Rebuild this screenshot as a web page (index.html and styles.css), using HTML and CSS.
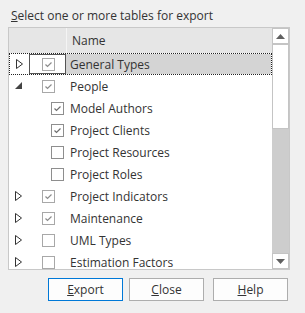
FILE: index.html
```html
<!DOCTYPE html>
<html lang="en">
<head>
    <meta charset="UTF-8">
    <title>Export Tables</title>
    <link rel="stylesheet" href="styles.css">
</head>
<body>
    <div class="prompt"><u>S</u>elect one or more tables for export</div>

    <div class="listbox">
        <div class="list">
            <div class="header">
                <span class="cell-exp"></span>
                <span class="cell-chk"></span>
                <span class="cell-name">Name</span>
            </div>

            <div class="row selected">
                <span class="cell-exp"><svg class="tri" width="7" height="10"><polygon points="0.5,0.5 6.5,5 0.5,9.5" /></svg></span>
                <span class="cell-chk"><span class="cb top checked"><svg width="11" height="11"><path d="M2.5 5.5 L4.5 7.5 L8.5 3.5" /></svg></span></span>
                <span class="cell-name">General Types</span>
            </div>
            <div class="row">
                <span class="cell-exp"><svg class="tri-open" width="8" height="8"><polygon points="7,0 7,7 0,7" /></svg></span>
                <span class="cell-chk"><span class="cb top checked"><svg width="11" height="11"><path d="M2.5 5.5 L4.5 7.5 L8.5 3.5" /></svg></span></span>
                <span class="cell-name">People</span>
            </div>
            <div class="row child">
                <span class="cell-exp"></span>
                <span class="cell-chk"><span class="cb checked"><svg width="11" height="11"><path d="M2.5 5.5 L4.5 7.5 L8.5 3.5" /></svg></span></span>
                <span class="cell-name">Model Authors</span>
            </div>
            <div class="row child">
                <span class="cell-exp"></span>
                <span class="cell-chk"><span class="cb checked"><svg width="11" height="11"><path d="M2.5 5.5 L4.5 7.5 L8.5 3.5" /></svg></span></span>
                <span class="cell-name">Project Clients</span>
            </div>
            <div class="row child">
                <span class="cell-exp"></span>
                <span class="cell-chk"><span class="cb"></span></span>
                <span class="cell-name">Project Resources</span>
            </div>
            <div class="row child">
                <span class="cell-exp"></span>
                <span class="cell-chk"><span class="cb"></span></span>
                <span class="cell-name">Project Roles</span>
            </div>
            <div class="row">
                <span class="cell-exp"><svg class="tri" width="7" height="10"><polygon points="0.5,0.5 6.5,5 0.5,9.5" /></svg></span>
                <span class="cell-chk"><span class="cb top checked"><svg width="11" height="11"><path d="M2.5 5.5 L4.5 7.5 L8.5 3.5" /></svg></span></span>
                <span class="cell-name">Project Indicators</span>
            </div>
            <div class="row">
                <span class="cell-exp"><svg class="tri" width="7" height="10"><polygon points="0.5,0.5 6.5,5 0.5,9.5" /></svg></span>
                <span class="cell-chk"><span class="cb top checked"><svg width="11" height="11"><path d="M2.5 5.5 L4.5 7.5 L8.5 3.5" /></svg></span></span>
                <span class="cell-name">Maintenance</span>
            </div>
            <div class="row">
                <span class="cell-exp"><svg class="tri" width="7" height="10"><polygon points="0.5,0.5 6.5,5 0.5,9.5" /></svg></span>
                <span class="cell-chk"><span class="cb top"></span></span>
                <span class="cell-name">UML Types</span>
            </div>
            <div class="row">
                <span class="cell-exp"><svg class="tri" width="7" height="10"><polygon points="0.5,0.5 6.5,5 0.5,9.5" /></svg></span>
                <span class="cell-chk"><span class="cb top"></span></span>
                <span class="cell-name">Estimation Factors</span>
            </div>
        </div>

        <div class="scrollbar">
            <div class="sb-btn"><svg width="9" height="5"><polygon points="0,5 4.5,0 9,5" /></svg></div>
            <div class="sb-thumb"></div>
            <div class="sb-track"></div>
            <div class="sb-btn"><svg width="9" height="5"><polygon points="0,0 9,0 4.5,5" /></svg></div>
        </div>
    </div>

    <div class="buttons">
        <button class="default"><u>E</u>xport</button>
        <button><u>C</u>lose</button>
        <button class="help"><u>H</u>elp</button>
    </div>
</body>
</html>
```

FILE: styles.css
```css
body {
    margin: 0;
    background-color: #f0f0f0;
    font-family: "Open Sans", "Noto Sans", sans-serif;
    font-size: 12px;
    color: #333;
    width: 305px;
    height: 313px;
    overflow: hidden;
}
.prompt {
    padding: 8px 0 0 11px;
    height: 19px;
    line-height: 15px;
}
.listbox {
    display: flex;
    margin-left: 8px;
    width: 280px;
    height: 241px;
    border: 1px solid #c8c8c8;
    background-color: #fff;
}
.list {
    flex: 1;
    overflow: hidden;
}
.header,
.row {
    display: grid;
    grid-template-columns: 20px 37px 1fr;
    align-items: center;
}
.header {
    height: 25px;
    background-color: #e6e6e6;
}
.header .cell-name {
    height: 25px;
    line-height: 25px;
    padding-left: 5px;
    border-left: 1px solid #f4f4f4;
}
.row {
    height: 22px;
    box-sizing: border-box;
}
.row .cell-name {
    padding: 1px 0 0 4px;
    line-height: 21px;
}
.row.selected {
    border: 1px dotted #222;
    grid-template-columns: 19px 37px 1fr;
}
.row.selected .cell-chk {
    height: 20px;
    box-sizing: border-box;
    border: 1px solid #555;
}
.row.selected .cell-name {
    background-color: #d4d4d4;
    line-height: 19px;
    padding-left: 4px;
}
.cell-exp {
    display: flex;
    align-items: center;
    padding-left: 6px;
}
.cell-chk {
    display: flex;
    align-items: center;
}
.tri polygon {
    fill: #fff;
    stroke: #333;
    stroke-width: 1;
}
.tri-open polygon {
    fill: #444;
}
.cb {
    width: 13px;
    height: 13px;
    box-sizing: border-box;
    border: 1px solid #8e8e8e;
    background-color: #fff;
    margin-left: 22px;
    display: flex;
    align-items: center;
    justify-content: center;
}
.cb.top {
    margin-left: 13px;
    border-color: #a8a8a8;
}
.row.selected .cb.top {
    margin-left: 12px;
}
.cb path {
    fill: none;
    stroke: #6e6e6e;
    stroke-width: 1.2;
}
.cb.top path {
    stroke: #8c8c8c;
}
.scrollbar {
    width: 17px;
    display: flex;
    flex-direction: column;
    background-color: #cdcdcd;
}
.sb-btn {
    height: 16px;
    box-sizing: border-box;
    border: 1px solid #c4c4c4;
    background-color: #fff;
    display: flex;
    align-items: center;
    justify-content: center;
}
.sb-btn polygon {
    fill: #606060;
}
.sb-thumb {
    height: 85px;
    box-sizing: border-box;
    border: 1px solid #c4c4c4;
    background-color: #fff;
}
.sb-track {
    flex: 1;
}
.buttons {
    display: flex;
    padding: 8px 0 0 48px;
}
button {
    width: 75px;
    height: 23px;
    margin-right: 6px;
    background-color: #fdfdfd;
    border: 1px solid #adadad;
    font-family: "Open Sans", "Noto Sans", sans-serif;
    font-size: 12px;
    color: #333;
    padding: 0;
}
button.default {
    border-color: #0078d7;
}
button.help {
    margin-left: 3px;
}
```
